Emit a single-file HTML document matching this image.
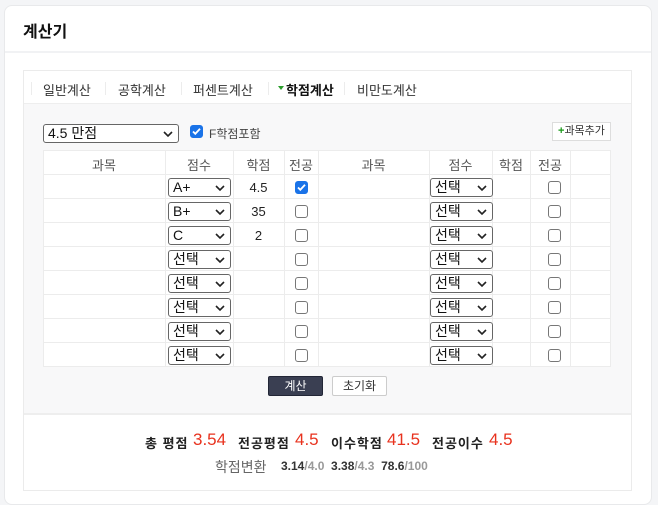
<!DOCTYPE html>
<html><head><meta charset="utf-8"><style>
*{box-sizing:border-box;margin:0;padding:0}
body{width:658px;height:496px;background:#f4f5f7;font-family:"Liberation Sans","Noto Sans CJK KR",sans-serif;position:relative;overflow:hidden;color:#222}
.a{position:absolute}
.card{left:4px;top:5px;width:648px;height:500px;background:#fff;border:1px solid #e8e9eb;border-radius:8px}
.sel{position:absolute;height:19px;border:1px solid #666;border-radius:3px;background:#fff;font-size:14px;line-height:17px;padding-left:4px;color:#111}
.sel svg{position:absolute;right:5px;top:6px}
.cb{position:absolute;width:13px;height:13px;border:1px solid #777;border-radius:3px;background:#fff}
.cbc{background:#1a73e8;border-color:#1a73e8}
.hl{position:absolute;height:1px;background:#ececec}
.vl{position:absolute;width:1px;background:#ececec}
.th{position:absolute;font-size:13px;color:#555;text-align:center;top:155px}
.td{position:absolute;font-size:13px;color:#222;text-align:center}
.rl{position:absolute;top:433px;font-size:13px;font-weight:bold;color:#222;letter-spacing:1px;white-space:nowrap}
.rv{position:absolute;top:430px;font-size:17px;color:#e8321e;white-space:nowrap}
</style></head><body>
<div class="a card"></div>
<div class="a" style="left:23px;top:18px;font-size:16px;font-weight:bold;color:#111">계산기</div>
<div class="a" style="left:5px;top:51px;width:646px;height:2px;background:#f1f2f4"></div>
<div class="a" style="left:23px;top:70px;width:609px;height:421px;border:1px solid #ebebeb;background:#fff"></div>
<div class="a" style="left:24px;top:103px;width:607px;height:312px;background:#f8f8f9;border-top:1px solid #eee;border-bottom:2px solid #eee"></div>
<!-- tabs -->
<div class="a" style="top:80px;left:43px;font-size:13px;color:#333;white-space:nowrap">일반계산</div>
<div class="a" style="top:80px;left:118px;font-size:13px;color:#333">공학계산</div>
<div class="a" style="top:80px;left:193px;font-size:13px;color:#333">퍼센트계산</div>
<div class="a" style="top:80px;left:286px;font-size:13px;color:#111;font-weight:bold">학점계산</div>
<div class="a" style="top:80px;left:357px;font-size:13px;color:#333">비만도계산</div>
<div class="vl" style="left:31px;top:82px;height:13px"></div>
<div class="vl" style="left:105px;top:82px;height:13px"></div>
<div class="vl" style="left:181px;top:82px;height:13px"></div>
<div class="vl" style="left:268px;top:82px;height:13px"></div>
<div class="vl" style="left:344px;top:82px;height:13px"></div>
<div class="a" style="left:278px;top:86px;width:0;height:0;border-left:3px solid transparent;border-right:3px solid transparent;border-top:4px solid #2a9d2a"></div>
<!-- top controls -->
<div class="sel" style="left:43px;top:124px;width:136px;height:19px;line-height:17px;font-size:14px">4.5 만점<svg width="10" height="7" viewBox="0 0 10 7"><path d="M1 1l4 4 4-4" stroke="#222" stroke-width="1.6" fill="none"/></svg></div>
<div class="cb cbc" style="left:190px;top:125px"><svg width="11" height="11" viewBox="0 0 11 11" style="position:absolute;left:0;top:0"><path d="M2 5.5l2.3 2.3 4.7-5" stroke="#fff" stroke-width="1.8" fill="none"/></svg></div>
<div class="a" style="left:209px;top:125px;font-size:12px;color:#444">F학점포함</div>
<div class="a" style="left:552px;top:122px;width:59px;height:19px;border:1px solid #ddd;background:#fff;font-size:11px;line-height:17px;padding-left:5px;color:#333"><span style="color:#1a9a1a;font-weight:bold">+</span>과목추가</div>
<!-- table -->
<div class="a" style="left:43px;top:150px;width:568px;height:217px;background:#fff;border:1px solid #ececec"></div>
<div class="hl" style="left:43px;top:174px;width:568px"></div>
<div class="hl" style="left:43px;top:198px;width:568px"></div>
<div class="hl" style="left:43px;top:222px;width:568px"></div>
<div class="hl" style="left:43px;top:246px;width:568px"></div>
<div class="hl" style="left:43px;top:270px;width:568px"></div>
<div class="hl" style="left:43px;top:294px;width:568px"></div>
<div class="hl" style="left:43px;top:318px;width:568px"></div>
<div class="hl" style="left:43px;top:342px;width:568px"></div>
<div class="vl" style="left:165px;top:150px;height:217px"></div>
<div class="vl" style="left:233px;top:150px;height:217px"></div>
<div class="vl" style="left:284px;top:150px;height:217px"></div>
<div class="vl" style="left:318px;top:150px;height:217px"></div>
<div class="vl" style="left:429px;top:150px;height:217px"></div>
<div class="vl" style="left:492px;top:150px;height:217px"></div>
<div class="vl" style="left:530px;top:150px;height:217px"></div>
<div class="vl" style="left:570px;top:150px;height:217px"></div>
<div class="th" style="left:43px;width:122px">과목</div>
<div class="th" style="left:165px;width:68px">점수</div>
<div class="th" style="left:233px;width:51px">학점</div>
<div class="th" style="left:284px;width:34px">전공</div>
<div class="th" style="left:318px;width:111px">과목</div>
<div class="th" style="left:429px;width:63px">점수</div>
<div class="th" style="left:492px;width:38px">학점</div>
<div class="th" style="left:530px;width:40px">전공</div>

<div id="rows"></div>
<script>
var v=["A+","B+","C","선택","선택","선택","선택","선택"],c=["4.5","35","2","","","","",""],h="";
var ch='<svg width="10" height="7" viewBox="0 0 10 7"><path d="M1 1l4 4 4-4" stroke="#222" stroke-width="1.6" fill="none"/></svg>';
for(var i=0;i<8;i++){var y=175+i*24;
h+='<div class="sel" style="left:168px;top:'+(y+3)+'px;width:63px">'+v[i]+ch+'</div>';
h+='<div class="td" style="left:233px;width:51px;top:'+(y+5)+'px">'+c[i]+'</div>';
h+=i==0?'<div class="cb cbc" style="left:295px;top:'+(y+6)+'px"><svg width="11" height="11" viewBox="0 0 11 11" style="position:absolute;left:0;top:0"><path d="M2 5.5l2.3 2.3 4.7-5" stroke="#fff" stroke-width="1.8" fill="none"/></svg></div>':'<div class="cb" style="left:295px;top:'+(y+6)+'px"></div>';
h+='<div class="sel" style="left:430px;top:'+(y+3)+'px;width:63px">선택'+ch+'</div>';
h+='<div class="cb" style="left:548px;top:'+(y+6)+'px"></div>';}
document.getElementById('rows').innerHTML=h;
</script>
<!-- buttons -->
<div class="a" style="left:268px;top:376px;width:55px;height:20px;background:#3a3f52;border:1px solid #222636;border-radius:2px;color:#fff;font-size:12px;text-align:center;line-height:18px">계산</div>
<div class="a" style="left:332px;top:376px;width:55px;height:20px;background:#fff;border:1px solid #ccc;border-radius:2px;color:#333;font-size:12px;text-align:center;line-height:18px">초기화</div>
<!-- results -->
<div class="rl" style="left:145px">총 평점</div>
<div class="rv" style="left:193px">3.54</div>
<div class="rl" style="left:238px">전공평점</div>
<div class="rv" style="left:295px">4.5</div>
<div class="rl" style="left:331px">이수학점</div>
<div class="rv" style="left:387px">41.5</div>
<div class="rl" style="left:432px">전공이수</div>
<div class="rv" style="left:489px">4.5</div>
<div class="a" style="left:215px;top:457px;font-size:14px;color:#666;white-space:nowrap">학점변환</div>
<div class="a" style="left:281px;top:459px;font-size:12px;font-weight:bold;color:#333;white-space:nowrap">3.14<span style="color:#999">/4.0</span> &nbsp;3.38<span style="color:#999">/4.3</span> &nbsp;78.6<span style="color:#999">/100</span></div>
</body></html>
